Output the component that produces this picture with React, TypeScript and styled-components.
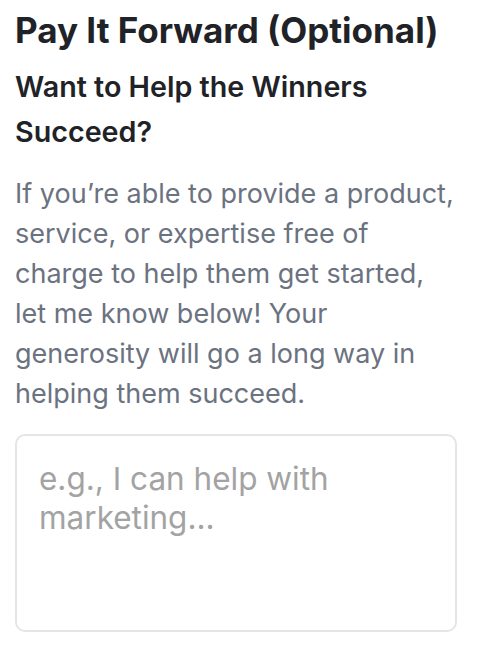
import styled, { createGlobalStyle } from "styled-components";

const GlobalStyle = createGlobalStyle`
  * { box-sizing: border-box; }
  body {
    margin: 0;
    background: #ffffff;
    font-family: Inter, "Noto Sans", sans-serif;
  }
`;

const Section = styled.section`
  padding: 8px 22px 0 15px;
`;

const Title = styled.h1`
  margin: 0;
  font-size: 35px;
  line-height: 44px;
  font-weight: 700;
  color: #1f2328;
`;

const Subtitle = styled.h2`
  margin: 12px 0 0;
  font-size: 28.7px;
  line-height: 45px;
  font-weight: 600;
  color: #1f2328;
`;

const Body = styled.p`
  margin: 20px 0 0;
  font-size: 27px;
  line-height: 40px;
  color: #6b7280;
`;

const Field = styled.textarea`
  display: block;
  width: calc(100% - 1px);
  height: 198px;
  margin-top: 20px;
  padding: 23px 22px;
  border: 2px solid #e3e5e9;
  border-radius: 10px;
  font-family: inherit;
  font-size: 31.5px;
  line-height: 39px;
  color: #1f2328;
  resize: none;
  outline: none;

  &::placeholder {
    color: #a3a3a3;
  }
`;

function App() {
  return (
    <>
      <GlobalStyle />
      <Section>
        <Title>Pay It Forward (Optional)</Title>
        <Subtitle>Want to Help the Winners Succeed?</Subtitle>
        <Body>
          If you’re able to provide a product, service, or expertise free of
          charge to help them get started, let me know below! Your generosity
          will go a long way in helping them succeed.
        </Body>
        <Field placeholder="e.g., I can help with marketing..." />
      </Section>
    </>
  );
}

export default App;
